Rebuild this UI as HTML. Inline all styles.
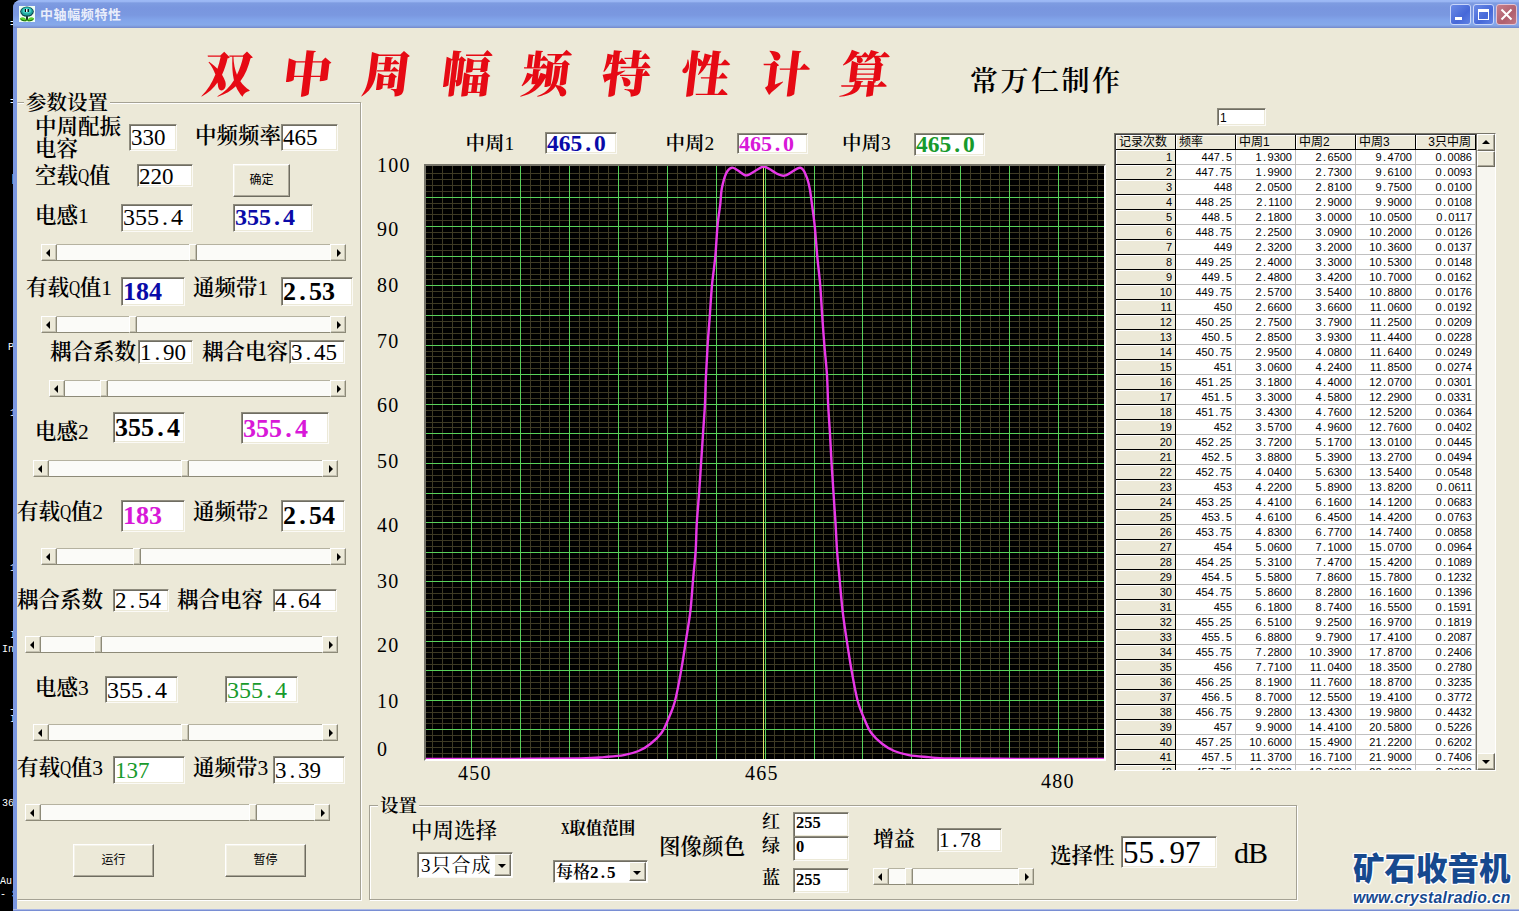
<!DOCTYPE html>
<html lang="zh-CN"><head><meta charset="utf-8"><title>中轴幅频特性</title>
<style>
*{box-sizing:border-box;margin:0;padding:0}
html,body{width:1519px;height:911px;overflow:hidden;background:#ECE9D8}
body{position:relative;font-family:"Liberation Serif","Noto Serif CJK SC",serif;color:#000}
.a{position:absolute;white-space:nowrap}
.lb{margin-top:1px;position:absolute;white-space:nowrap;font-size:21.500px;line-height:22px;font-weight:600;letter-spacing:0}
.tb{position:absolute;background:#fff;border:1px solid;border-color:#8E8B7D #FBFAF6 #FBFAF6 #8E8B7D;box-shadow:inset 1px 1px 0 #6F6D62, inset -1px -1px 0 #ECE9D8;white-space:nowrap;overflow:hidden;font-size:24px;padding-left:1px}
.tb i{font-style:normal;display:inline-block;width:.5em;text-align:center}
.b{font-weight:700}
.n{font-weight:400}
.q{font-weight:400;display:inline-block;width:.5em;transform:scaleX(.72);transform-origin:0 50%}
.sb{position:absolute;height:17px;background:#FBFBF8;border-top:1px solid #B5B2A0;border-bottom:1px solid #8D8A78}
.sb .l,.sb .r,.sb .t{position:absolute;top:-1px;height:17px;background:#ECE9D8;border:1px solid;border-color:#FFFFFF #8D8A78 #8D8A78 #FFFFFF;box-shadow:inset -1px -1px 0 #C5C2B2}
.sb .l{left:0;width:16px}
.sb .r{right:0;width:16px}
.sb .t{width:8px}
.sb .l:after,.sb .r:after{content:"";position:absolute;top:4px;border:4px solid transparent}
.sb .l:after{left:0px;border-right-color:#000;border-left-width:0;left:4px}
.sb .r:after{border-left-color:#000;border-right-width:0;left:6px}
.btn{position:absolute;background:#ECE9D8;border:1px solid;border-color:#FFFFFF #6E6C60 #6E6C60 #FFFFFF;box-shadow:inset -1px -1px 0 #ACA899, inset 1px 1px 0 #F4F2E8;font-family:"Liberation Sans","Noto Sans CJK SC",sans-serif;font-size:12px;text-align:center}
.gb{position:absolute;border:1px solid #A5A294;box-shadow:inset 1px 1px 0 #fff, 1px 1px 0 #fff}
.lg{position:absolute;background:#ECE9D8;white-space:nowrap;font-weight:600}
.ax{position:absolute;white-space:nowrap;font-size:20px;line-height:20px;letter-spacing:1.200px}
.cb{position:absolute;background:#fff;border:1px solid;border-color:#8E8B7D #FBFAF6 #FBFAF6 #8E8B7D;box-shadow:inset 1px 1px 0 #6F6D62;white-space:nowrap;overflow:hidden}
.cb u{position:absolute;right:1px;top:1px;bottom:1px;width:17px;background:#ECE9D8;border:1px solid;border-color:#fff #6E6C60 #6E6C60 #fff;box-shadow:inset -1px -1px 0 #ACA899}
.cb u:after{content:"";position:absolute;left:3px;top:50%;margin-top:-1px;border:4px solid transparent;border-top:4px solid #000;border-bottom-width:0}
table.g{position:absolute;border-collapse:separate;border-spacing:0;font-family:"Liberation Sans","Noto Sans CJK SC",sans-serif;font-size:11px;table-layout:fixed}
table.g td{height:15px;width:60px;line-height:14px;padding:0 3px 0 0;text-align:right;background:#fff;border-right:1px solid #C0C0C0;border-bottom:1px solid #C0C0C0;overflow:hidden;white-space:nowrap}
table.g td i{font-style:normal;display:inline-block;width:6px;text-align:center}
table.g td.h{background:#ECE9D8;border-right:1px solid #000;border-bottom:1px solid #000;box-shadow:inset 1px 1px 0 #fff}
table.g tr.hd td{text-align:left;padding-left:3px;font-size:12px}
</style></head>
<body>
<div class="a" style="left:0;top:0;width:26px;height:911px;background:#000"></div>
<div class="a" style="left:8px;top:342px;font-family:'Liberation Mono',monospace;font-size:10px;line-height:12px;color:#fff;width:5px;overflow:hidden">P</div>
<div class="a" style="left:2px;top:644px;font-family:'Liberation Mono',monospace;font-size:10px;line-height:12px;color:#fff;width:11px;overflow:hidden">In</div>
<div class="a" style="left:10px;top:630px;font-family:'Liberation Mono',monospace;font-size:10px;line-height:12px;color:#fff;width:3px;overflow:hidden">I</div>
<div class="a" style="left:2px;top:798px;font-family:'Liberation Mono',monospace;font-size:10px;line-height:12px;color:#fff;width:11px;overflow:hidden">36</div>
<div class="a" style="left:0px;top:876px;font-family:'Liberation Mono',monospace;font-size:10px;line-height:12px;color:#fff;width:13px;overflow:hidden">Au</div>
<div class="a" style="left:0px;top:889px;font-family:'Liberation Mono',monospace;font-size:10px;line-height:12px;color:#fff;width:13px;overflow:hidden">- S</div>
<div class="a" style="left:10px;top:19px;font-family:'Liberation Mono',monospace;font-size:10px;line-height:12px;color:#fff;width:3px;overflow:hidden">=</div>
<div class="a" style="left:10px;top:97px;font-family:'Liberation Mono',monospace;font-size:10px;line-height:12px;color:#fff;width:3px;overflow:hidden">=</div>
<div class="a" style="left:10px;top:408px;font-family:'Liberation Mono',monospace;font-size:10px;line-height:12px;color:#fff;width:3px;overflow:hidden">1</div>
<div class="a" style="left:10px;top:563px;font-family:'Liberation Mono',monospace;font-size:10px;line-height:12px;color:#fff;width:3px;overflow:hidden">1</div>
<div class="a" style="left:9px;top:704px;font-family:'Liberation Mono',monospace;font-size:10px;line-height:12px;color:#fff;width:4px;overflow:hidden">-</div>
<div class="a" style="left:10px;top:714px;font-family:'Liberation Mono',monospace;font-size:10px;line-height:12px;color:#fff;width:3px;overflow:hidden">I</div>
<div class="a" style="left:10px;top:174px;font-family:'Liberation Mono',monospace;font-size:10px;line-height:12px;color:#fff;width:3px;overflow:hidden">|</div>
<div class="a" style="left:13px;top:0;width:1506px;height:911px;background:#7B97E0;border-top-left-radius:8px"></div>
<div class="a" style="left:13px;top:0;width:1506px;height:28px;border-top-left-radius:8px;background:linear-gradient(#9DBAF6 0,#9AB6F3 1.500px,#7E9CE1 3px,#7996DF 8px,#7A98E0 15px,#82A4EA 20px,#86A9EA 25px,#7C94D6 27px,#7088CA 28px)"></div>
<div class="a" style="left:17px;top:28px;width:1502px;height:881px;background:#ECE9D8"></div>
<svg class="a" style="left:19px;top:6px" width="16" height="16" viewBox="0 0 16 16"><rect width="16" height="16" fill="#EEFFF4"/><path d="M8 9.500v5.500" stroke="#04240E" stroke-width="1.800"/><path d="M8 15C5.500 15.600 2 15 .8 12.400 3.600 10.200 6.800 11.600 8 15zM8 15c2.500.6 6 0 7.200-2.600C12.400 10.200 9.200 11.600 8 15z" fill="#5AD02C"/><path d="M1.500 13.200c1.500 1.300 3.500 1.700 5.500 1.500M14.500 13.200c-1.500 1.300-3.500 1.700-5.500 1.500" stroke="#17680F" stroke-width="1" fill="none"/><ellipse cx="8" cy="5.600" rx="6.800" ry="5.200" fill="#0C4450"/><ellipse cx="8" cy="5.200" rx="5.800" ry="4.300" fill="#1FA59B"/><ellipse cx="8" cy="4.800" rx="4.300" ry="2.700" fill="#45D0C6"/><rect x="5.900" y="3" width="1.200" height="3" fill="#000"/><rect x="7.100" y="3" width="1.500" height="3" fill="#fff"/><rect x="8.600" y="3" width="1.200" height="3" fill="#000"/></svg>
<div class="a" style="left:40px;top:7px;font:700 13px/15px 'Liberation Sans','Noto Sans CJK SC',sans-serif;color:#E9EEFB;letter-spacing:.6px">中轴幅频特性</div>
<div class="a" style="left:1450px;top:4px;width:21px;height:21px;border-radius:3px;border:1px solid #C9D6FA;background:linear-gradient(135deg,#6B8BE6,#4668D8 60%,#5F82E4)">
<div class="a" style="left:4px;top:12px;width:7px;height:3px;background:#fff"></div>
</div>
<div class="a" style="left:1473px;top:4px;width:21px;height:21px;border-radius:3px;border:1px solid #C9D6FA;background:linear-gradient(135deg,#6B8BE6,#4668D8 60%,#5F82E4)">
<div class="a" style="left:4px;top:4px;width:11px;height:11px;border:1px solid #fff;border-top-width:3px"></div>
</div>
<div class="a" style="left:1496px;top:4px;width:21px;height:21px;border-radius:3px;border:1px solid #E3C3D3;background:linear-gradient(135deg,#C77F8B,#B0606E 60%,#C07784)">
<svg class="a" style="left:0;top:0" width="19" height="19" viewBox="0 0 19 19"><path d="M4.500 4.500l10 10M14.500 4.500l-10 10" stroke="#fff" stroke-width="2"/></svg>
</div>
<div class="a" style="left:198px;top:36px;font-size:49px;line-height:80px;font-weight:900;color:#E60A14;letter-spacing:30.700px;transform:skewX(-7deg);transform-origin:0 100%">双中周幅频特性计算</div>
<div class="a" style="left:970px;top:64px;font-size:28px;line-height:36px;font-weight:600;letter-spacing:2.500px">常万仁制作</div>
<div class="tb" style="left:1217px;top:108px;width:49px;height:18px;font:12px/18px 'Liberation Sans',sans-serif;padding-left:2px">1</div>
<div class="gb" style="left:17px;top:102px;width:344px;height:798px;border-left-color:transparent;box-shadow:inset 0 1px 0 #fff,1px 1px 0 #fff"></div>
<div class="lg" style="left:24px;top:91.500px;font-size:20.500px;line-height:22px;padding:0 2px">参数设置</div>
<div class="lb" style="left:35px;top:115px;">中周配振<br>电容</div>
<div class="tb " style="left:129px;top:124px;width:48px;height:27px;line-height:26px;font-size:23px;">330</div>
<div class="lb" style="left:195px;top:124px;">中频频率</div>
<div class="tb " style="left:281px;top:124px;width:57px;height:27px;line-height:26px;font-size:23px;">465</div>
<div class="lb" style="left:35px;top:164px;">空载<span class="q">Q</span>值</div>
<div class="tb " style="left:137px;top:164px;width:56px;height:23px;line-height:24px;font-size:23px;">220</div>
<div class="btn" style="left:233px;top:164px;width:57px;height:33px;line-height:31px">确定</div>
<div class="lb" style="left:35px;top:204px;">电感<span class="n">1</span></div>
<div class="tb " style="left:121px;top:204px;width:72px;height:28px;line-height:24.0px;">355<i>.</i>4</div>
<div class="tb b" style="left:233px;top:204px;width:80px;height:28px;line-height:24.0px;color:#0A0AA8;">355<i>.</i>4</div>
<div class="sb" style="left:41px;top:244px;width:305px"><div class="l"></div><div class="t" style="left:148px"></div><div class="r"></div></div>
<div class="lb" style="left:26px;top:276px;">有载<span class="q">Q</span>值<span class="n">1</span></div>
<div class="tb b" style="left:121px;top:277px;width:64px;height:29px;line-height:28px;color:#0A0AA8;font-size:26px;">184</div>
<div class="lb" style="left:193px;top:276px;">通频带<span class="n">1</span></div>
<div class="tb b" style="left:281px;top:277px;width:72px;height:29px;line-height:28px;font-size:26px;">2<i>.</i>53</div>
<div class="sb" style="left:41px;top:316px;width:305px"><div class="l"></div><div class="t" style="left:88px"></div><div class="r"></div></div>
<div class="lb" style="left:50px;top:340px;">耦合系数</div>
<div class="tb " style="left:138px;top:340px;width:55px;height:24px;line-height:23px;font-size:23px;">1<i>.</i>90</div>
<div class="lb" style="left:202px;top:340px;">耦合电容</div>
<div class="tb " style="left:289px;top:340px;width:56px;height:24px;line-height:23px;font-size:23px;">3<i>.</i>45</div>
<div class="sb" style="left:49px;top:380px;width:297px"><div class="l"></div><div class="t" style="left:51px"></div><div class="r"></div></div>
<div class="lb" style="left:35px;top:420px;">电感<span class="n">2</span></div>
<div class="tb b" style="left:113px;top:412px;width:72px;height:31px;line-height:30px;font-size:26px;">355<i>.</i>4</div>
<div class="tb b" style="left:241px;top:412px;width:88px;height:32px;line-height:31px;color:#D818D8;font-size:26px;">355<i>.</i>4</div>
<div class="sb" style="left:33px;top:460px;width:305px"><div class="l"></div><div class="t" style="left:148px"></div><div class="r"></div></div>
<div class="lb" style="left:17px;top:500px;">有载<span class="q">Q</span>值<span class="n">2</span></div>
<div class="tb b" style="left:121px;top:500px;width:64px;height:32px;line-height:29px;color:#D818D8;font-size:26px;">183</div>
<div class="lb" style="left:193px;top:500px;">通频带<span class="n">2</span></div>
<div class="tb b" style="left:281px;top:500px;width:64px;height:32px;line-height:29px;font-size:26px;">2<i>.</i>54</div>
<div class="sb" style="left:41px;top:548px;width:305px"><div class="l"></div><div class="t" style="left:92px"></div><div class="r"></div></div>
<div class="lb" style="left:17px;top:588px;">耦合系数</div>
<div class="tb " style="left:113px;top:589px;width:56px;height:23px;line-height:22px;font-size:23px;">2<i>.</i>54</div>
<div class="lb" style="left:177px;top:588px;">耦合电容</div>
<div class="tb " style="left:273px;top:589px;width:64px;height:23px;line-height:22px;font-size:23px;">4<i>.</i>64</div>
<div class="sb" style="left:25px;top:636px;width:313px"><div class="l"></div><div class="t" style="left:69px"></div><div class="r"></div></div>
<div class="lb" style="left:35px;top:676px;">电感<span class="n">3</span></div>
<div class="tb " style="left:105px;top:676px;width:73px;height:27px;line-height:27.0px;font-size:24px;">355<i>.</i>4</div>
<div class="tb " style="left:225px;top:676px;width:73px;height:27px;line-height:27.0px;color:#189A2C;font-size:24px;">355<i>.</i>4</div>
<div class="sb" style="left:33px;top:724px;width:305px"><div class="l"></div><div class="t" style="left:148px"></div><div class="r"></div></div>
<div class="lb" style="left:17px;top:756px;">有载<span class="q">Q</span>值<span class="n">3</span></div>
<div class="tb " style="left:113px;top:756px;width:72px;height:28px;line-height:27px;color:#189A2C;font-size:23px;">137</div>
<div class="lb" style="left:193px;top:756px;">通频带<span class="n">3</span></div>
<div class="tb " style="left:273px;top:756px;width:72px;height:28px;line-height:27px;font-size:23px;">3<i>.</i>39</div>
<div class="sb" style="left:25px;top:804px;width:305px"><div class="l"></div><div class="t" style="left:224px"></div><div class="r"></div></div>
<div class="btn" style="left:73px;top:844px;width:81px;height:33px;line-height:31px">运行</div>
<div class="btn" style="left:225px;top:844px;width:81px;height:33px;line-height:31px">暂停</div>
<div class="a" style="left:424px;top:164px;width:682px;height:597px;border:2px solid;border-color:#77756A #FFFFFF #FFFFFF #77756A;background:#000"></div>
<svg class="a" style="left:426px;top:166px" width="678" height="593" viewBox="426 166 678 593" shape-rendering="crispEdges"><rect x="426" y="166" width="678" height="593" fill="#000"/><path d="M432.5 166V759M442.5 166V759M452.5 166V759M461.5 166V759M481.5 166V759M491.5 166V759M501.5 166V759M510.5 166V759M530.5 166V759M540.5 166V759M549.5 166V759M559.5 166V759M579.5 166V759M589.5 166V759M598.5 166V759M608.5 166V759M628.5 166V759M637.5 166V759M647.5 166V759M657.5 166V759M677.5 166V759M686.5 166V759M696.5 166V759M706.5 166V759M725.5 166V759M735.5 166V759M745.5 166V759M755.5 166V759M774.5 166V759M784.5 166V759M794.5 166V759M804.5 166V759M823.5 166V759M833.5 166V759M843.5 166V759M853.5 166V759M872.5 166V759M882.5 166V759M892.5 166V759M902.5 166V759M921.5 166V759M931.5 166V759M941.5 166V759M950.5 166V759M970.5 166V759M980.5 166V759M990.5 166V759M999.5 166V759M1019.5 166V759M1029.5 166V759M1038.5 166V759M1048.5 166V759M1068.5 166V759M1078.5 166V759M1087.5 166V759M1097.5 166V759M426 173.5H1104M426 179.5H1104M426 185.5H1104M426 191.5H1104M426 203.5H1104M426 208.5H1104M426 214.5H1104M426 220.5H1104M426 232.5H1104M426 238.5H1104M426 244.5H1104M426 250.5H1104M426 262.5H1104M426 268.5H1104M426 274.5H1104M426 279.5H1104M426 291.5H1104M426 297.5H1104M426 303.5H1104M426 309.5H1104M426 321.5H1104M426 327.5H1104M426 333.5H1104M426 339.5H1104M426 351.5H1104M426 356.5H1104M426 362.5H1104M426 368.5H1104M426 380.5H1104M426 386.5H1104M426 392.5H1104M426 398.5H1104M426 410.5H1104M426 416.5H1104M426 422.5H1104M426 427.5H1104M426 439.5H1104M426 445.5H1104M426 451.5H1104M426 457.5H1104M426 469.5H1104M426 475.5H1104M426 481.5H1104M426 487.5H1104M426 499.5H1104M426 504.5H1104M426 510.5H1104M426 516.5H1104M426 528.5H1104M426 534.5H1104M426 540.5H1104M426 546.5H1104M426 558.5H1104M426 564.5H1104M426 570.5H1104M426 575.5H1104M426 587.5H1104M426 593.5H1104M426 599.5H1104M426 605.5H1104M426 617.5H1104M426 623.5H1104M426 629.5H1104M426 635.5H1104M426 647.5H1104M426 652.5H1104M426 658.5H1104M426 664.5H1104M426 676.5H1104M426 682.5H1104M426 688.5H1104M426 694.5H1104M426 706.5H1104M426 712.5H1104M426 718.5H1104M426 723.5H1104M426 735.5H1104M426 741.5H1104M426 747.5H1104M426 753.5H1104" stroke="#3E3A24" stroke-width="1" fill="none"/><path d="M471.5 166V759M520.5 166V759M569.5 166V759M618.5 166V759M667.5 166V759M716.5 166V759M765.5 166V759M814.5 166V759M862.5 166V759M911.5 166V759M960.5 166V759M1009.5 166V759M1058.5 166V759M426 197.5H1104M426 226.5H1104M426 256.5H1104M426 285.5H1104M426 315.5H1104M426 345.5H1104M426 374.5H1104M426 404.5H1104M426 433.5H1104M426 463.5H1104M426 493.5H1104M426 522.5H1104M426 552.5H1104M426 581.5H1104M426 611.5H1104M426 641.5H1104M426 670.5H1104M426 700.5H1104M426 729.5H1104" stroke="#58D25A" stroke-width="1" fill="none"/><path d="M763.5 166V759" stroke="#DCE468" stroke-width="1" fill="none"/><path d="M426.0 759.0C438.3 759.0 474.3 759.0 500.0 758.9C525.7 758.8 562.6 758.8 580.0 758.5C597.4 758.2 597.1 757.7 604.4 757.1C611.7 756.5 618.1 756.1 623.8 755.1C629.5 754.1 634.0 752.9 638.5 751.0C643.0 749.1 646.8 746.8 650.6 743.7C654.5 740.7 658.8 736.6 661.6 732.7C664.5 728.8 665.5 725.8 667.7 720.5C669.9 715.2 672.8 709.3 675.0 701.0C677.2 692.7 679.3 680.8 681.1 670.6C682.9 660.5 684.5 650.1 686.0 640.1C687.5 630.1 689.2 621.5 690.4 610.9C691.6 600.3 692.4 586.9 693.3 576.8C694.2 566.6 695.1 559.0 695.7 550.0C696.3 541.0 696.2 532.4 696.8 522.9C697.4 513.4 698.4 502.7 699.1 492.9C699.8 483.1 700.4 473.9 701.0 464.1C701.6 454.3 702.4 443.9 703.0 434.1C703.6 424.3 704.4 415.1 704.9 405.3C705.4 395.5 705.5 385.4 706.0 375.4C706.5 365.4 707.0 355.4 707.6 345.5C708.2 335.6 709.1 326.0 709.8 315.9C710.5 305.8 711.1 295.0 712.0 285.1C712.9 275.2 714.4 266.5 715.3 256.6C716.2 246.7 716.7 234.7 717.5 225.9C718.3 217.1 719.6 210.1 720.3 203.9C721.0 197.7 720.8 193.6 721.8 188.5C722.8 183.4 724.6 176.7 726.2 173.2C727.9 169.7 729.7 168.1 731.7 167.7C733.7 167.2 735.6 169.2 738.0 170.5C740.4 171.8 743.2 175.3 746.0 175.4C748.8 175.5 752.1 172.5 755.0 171.0C757.9 169.5 760.8 166.7 763.6 166.6C766.4 166.5 769.6 169.3 772.0 170.6C774.4 171.9 775.8 173.4 778.0 174.2C780.2 175.0 781.8 176.5 785.5 175.4C789.2 174.3 796.7 167.5 800.2 167.7C803.7 167.9 804.8 173.0 806.4 176.5C808.0 180.0 808.8 183.9 809.7 188.5C810.6 193.1 811.1 197.7 811.9 203.9C812.7 210.1 813.8 217.1 814.7 225.9C815.6 234.7 816.4 246.7 817.3 256.6C818.2 266.5 819.4 275.2 820.2 285.1C821.0 295.0 821.5 305.8 822.2 315.9C822.9 326.0 823.6 335.6 824.4 345.5C825.2 355.4 826.4 365.4 827.0 375.4C827.6 385.4 827.7 395.5 828.2 405.3C828.7 415.1 829.4 424.3 830.0 434.1C830.6 443.9 831.0 454.3 831.6 464.1C832.2 473.9 832.9 483.1 833.5 492.9C834.1 502.7 834.9 513.4 835.5 522.9C836.1 532.4 836.4 541.0 837.0 550.0C837.6 559.0 838.5 566.6 839.4 576.8C840.3 586.9 841.4 600.3 842.6 610.9C843.8 621.5 845.2 630.1 846.7 640.1C848.2 650.1 849.8 660.5 851.6 670.6C853.4 680.8 855.5 692.7 857.7 701.0C859.9 709.3 862.8 715.2 865.0 720.5C867.2 725.8 868.2 728.8 871.1 732.7C874.0 736.6 878.2 740.7 882.1 743.7C886.0 746.8 889.8 749.1 894.3 751.0C898.8 752.9 903.2 754.1 908.9 755.1C914.6 756.1 921.5 756.5 928.4 757.1C935.2 757.7 933.1 758.2 950.0 758.5C966.9 758.8 1004.3 758.8 1030.0 758.9C1055.7 759.0 1091.7 759.0 1104.0 759.0" stroke="#E838E8" stroke-width="2.400" fill="none" stroke-linejoin="round" shape-rendering="auto"/></svg>
<div class="ax" style="left:377px;top:155px">100</div>
<div class="ax" style="left:377px;top:219px">90</div>
<div class="ax" style="left:377px;top:275px">80</div>
<div class="ax" style="left:377px;top:331px">70</div>
<div class="ax" style="left:377px;top:395px">60</div>
<div class="ax" style="left:377px;top:451px">50</div>
<div class="ax" style="left:377px;top:515px">40</div>
<div class="ax" style="left:377px;top:571px">30</div>
<div class="ax" style="left:377px;top:635px">20</div>
<div class="ax" style="left:377px;top:691px">10</div>
<div class="ax" style="left:377px;top:739px">0</div>
<div class="ax" style="left:458px;top:763px">450</div>
<div class="ax" style="left:745px;top:763px">465</div>
<div class="ax" style="left:1041px;top:771px">480</div>
<div class="a" style="left:465.5px;top:132.5px;font-size:19.5px;line-height:21.5px;font-weight:600;">中周<span class="n">1</span></div>
<div class="tb b" style="left:545px;top:132px;width:72px;height:22px;line-height:21px;color:#0A0AA8;font-size:23.5px;">465<i>.</i>0</div>
<div class="a" style="left:665.5px;top:132.5px;font-size:19.5px;line-height:21.5px;font-weight:600;">中周<span class="n">2</span></div>
<div class="tb b" style="left:737px;top:133px;width:71px;height:21px;line-height:19.0px;color:#D818D8;font-size:22px;">465<i>.</i>0</div>
<div class="a" style="left:842px;top:132.5px;font-size:19.5px;line-height:21.5px;font-weight:600;">中周<span class="n">3</span></div>
<div class="tb b" style="left:914px;top:133px;width:71px;height:23px;line-height:20px;color:#189A2C;font-size:23.5px;">465<i>.</i>0</div>
<div class="a" style="left:1114px;top:133px;width:382px;height:638px;border:1px solid;border-color:#77756A #fff #fff #77756A;background:#ECE9D8"></div>
<div class="a" style="left:1115px;top:134px;width:362px;height:636px;overflow:hidden;border-left:1px solid #404040;border-top:1px solid #404040;border-right:1px solid #77756A;background:#fff">
<table class="g" style="left:0;top:0;width:360px"><tr class="hd">
<td class="h">记录次数</td>
<td class="h">频率</td>
<td class="h">中周1</td>
<td class="h">中周2</td>
<td class="h">中周3</td>
<td class="h" style="text-align:right;padding-right:4px">3只中周</td>
</tr>
<tr><td class="h">1</td><td>447<i>.</i>5</td><td>1<i>.</i>9300</td><td>2<i>.</i>6500</td><td>9<i>.</i>4700</td><td>0<i>.</i>0086</td></tr>
<tr><td class="h">2</td><td>447<i>.</i>75</td><td>1<i>.</i>9900</td><td>2<i>.</i>7300</td><td>9<i>.</i>6100</td><td>0<i>.</i>0093</td></tr>
<tr><td class="h">3</td><td>448</td><td>2<i>.</i>0500</td><td>2<i>.</i>8100</td><td>9<i>.</i>7500</td><td>0<i>.</i>0100</td></tr>
<tr><td class="h">4</td><td>448<i>.</i>25</td><td>2<i>.</i>1100</td><td>2<i>.</i>9000</td><td>9<i>.</i>9000</td><td>0<i>.</i>0108</td></tr>
<tr><td class="h">5</td><td>448<i>.</i>5</td><td>2<i>.</i>1800</td><td>3<i>.</i>0000</td><td>10<i>.</i>0500</td><td>0<i>.</i>0117</td></tr>
<tr><td class="h">6</td><td>448<i>.</i>75</td><td>2<i>.</i>2500</td><td>3<i>.</i>0900</td><td>10<i>.</i>2000</td><td>0<i>.</i>0126</td></tr>
<tr><td class="h">7</td><td>449</td><td>2<i>.</i>3200</td><td>3<i>.</i>2000</td><td>10<i>.</i>3600</td><td>0<i>.</i>0137</td></tr>
<tr><td class="h">8</td><td>449<i>.</i>25</td><td>2<i>.</i>4000</td><td>3<i>.</i>3000</td><td>10<i>.</i>5300</td><td>0<i>.</i>0148</td></tr>
<tr><td class="h">9</td><td>449<i>.</i>5</td><td>2<i>.</i>4800</td><td>3<i>.</i>4200</td><td>10<i>.</i>7000</td><td>0<i>.</i>0162</td></tr>
<tr><td class="h">10</td><td>449<i>.</i>75</td><td>2<i>.</i>5700</td><td>3<i>.</i>5400</td><td>10<i>.</i>8800</td><td>0<i>.</i>0176</td></tr>
<tr><td class="h">11</td><td>450</td><td>2<i>.</i>6600</td><td>3<i>.</i>6600</td><td>11<i>.</i>0600</td><td>0<i>.</i>0192</td></tr>
<tr><td class="h">12</td><td>450<i>.</i>25</td><td>2<i>.</i>7500</td><td>3<i>.</i>7900</td><td>11<i>.</i>2500</td><td>0<i>.</i>0209</td></tr>
<tr><td class="h">13</td><td>450<i>.</i>5</td><td>2<i>.</i>8500</td><td>3<i>.</i>9300</td><td>11<i>.</i>4400</td><td>0<i>.</i>0228</td></tr>
<tr><td class="h">14</td><td>450<i>.</i>75</td><td>2<i>.</i>9500</td><td>4<i>.</i>0800</td><td>11<i>.</i>6400</td><td>0<i>.</i>0249</td></tr>
<tr><td class="h">15</td><td>451</td><td>3<i>.</i>0600</td><td>4<i>.</i>2400</td><td>11<i>.</i>8500</td><td>0<i>.</i>0274</td></tr>
<tr><td class="h">16</td><td>451<i>.</i>25</td><td>3<i>.</i>1800</td><td>4<i>.</i>4000</td><td>12<i>.</i>0700</td><td>0<i>.</i>0301</td></tr>
<tr><td class="h">17</td><td>451<i>.</i>5</td><td>3<i>.</i>3000</td><td>4<i>.</i>5800</td><td>12<i>.</i>2900</td><td>0<i>.</i>0331</td></tr>
<tr><td class="h">18</td><td>451<i>.</i>75</td><td>3<i>.</i>4300</td><td>4<i>.</i>7600</td><td>12<i>.</i>5200</td><td>0<i>.</i>0364</td></tr>
<tr><td class="h">19</td><td>452</td><td>3<i>.</i>5700</td><td>4<i>.</i>9600</td><td>12<i>.</i>7600</td><td>0<i>.</i>0402</td></tr>
<tr><td class="h">20</td><td>452<i>.</i>25</td><td>3<i>.</i>7200</td><td>5<i>.</i>1700</td><td>13<i>.</i>0100</td><td>0<i>.</i>0445</td></tr>
<tr><td class="h">21</td><td>452<i>.</i>5</td><td>3<i>.</i>8800</td><td>5<i>.</i>3900</td><td>13<i>.</i>2700</td><td>0<i>.</i>0494</td></tr>
<tr><td class="h">22</td><td>452<i>.</i>75</td><td>4<i>.</i>0400</td><td>5<i>.</i>6300</td><td>13<i>.</i>5400</td><td>0<i>.</i>0548</td></tr>
<tr><td class="h">23</td><td>453</td><td>4<i>.</i>2200</td><td>5<i>.</i>8900</td><td>13<i>.</i>8200</td><td>0<i>.</i>0611</td></tr>
<tr><td class="h">24</td><td>453<i>.</i>25</td><td>4<i>.</i>4100</td><td>6<i>.</i>1600</td><td>14<i>.</i>1200</td><td>0<i>.</i>0683</td></tr>
<tr><td class="h">25</td><td>453<i>.</i>5</td><td>4<i>.</i>6100</td><td>6<i>.</i>4500</td><td>14<i>.</i>4200</td><td>0<i>.</i>0763</td></tr>
<tr><td class="h">26</td><td>453<i>.</i>75</td><td>4<i>.</i>8300</td><td>6<i>.</i>7700</td><td>14<i>.</i>7400</td><td>0<i>.</i>0858</td></tr>
<tr><td class="h">27</td><td>454</td><td>5<i>.</i>0600</td><td>7<i>.</i>1000</td><td>15<i>.</i>0700</td><td>0<i>.</i>0964</td></tr>
<tr><td class="h">28</td><td>454<i>.</i>25</td><td>5<i>.</i>3100</td><td>7<i>.</i>4700</td><td>15<i>.</i>4200</td><td>0<i>.</i>1089</td></tr>
<tr><td class="h">29</td><td>454<i>.</i>5</td><td>5<i>.</i>5800</td><td>7<i>.</i>8600</td><td>15<i>.</i>7800</td><td>0<i>.</i>1232</td></tr>
<tr><td class="h">30</td><td>454<i>.</i>75</td><td>5<i>.</i>8600</td><td>8<i>.</i>2800</td><td>16<i>.</i>1600</td><td>0<i>.</i>1396</td></tr>
<tr><td class="h">31</td><td>455</td><td>6<i>.</i>1800</td><td>8<i>.</i>7400</td><td>16<i>.</i>5500</td><td>0<i>.</i>1591</td></tr>
<tr><td class="h">32</td><td>455<i>.</i>25</td><td>6<i>.</i>5100</td><td>9<i>.</i>2500</td><td>16<i>.</i>9700</td><td>0<i>.</i>1819</td></tr>
<tr><td class="h">33</td><td>455<i>.</i>5</td><td>6<i>.</i>8800</td><td>9<i>.</i>7900</td><td>17<i>.</i>4100</td><td>0<i>.</i>2087</td></tr>
<tr><td class="h">34</td><td>455<i>.</i>75</td><td>7<i>.</i>2800</td><td>10<i>.</i>3900</td><td>17<i>.</i>8700</td><td>0<i>.</i>2406</td></tr>
<tr><td class="h">35</td><td>456</td><td>7<i>.</i>7100</td><td>11<i>.</i>0400</td><td>18<i>.</i>3500</td><td>0<i>.</i>2780</td></tr>
<tr><td class="h">36</td><td>456<i>.</i>25</td><td>8<i>.</i>1900</td><td>11<i>.</i>7600</td><td>18<i>.</i>8700</td><td>0<i>.</i>3235</td></tr>
<tr><td class="h">37</td><td>456<i>.</i>5</td><td>8<i>.</i>7000</td><td>12<i>.</i>5500</td><td>19<i>.</i>4100</td><td>0<i>.</i>3772</td></tr>
<tr><td class="h">38</td><td>456<i>.</i>75</td><td>9<i>.</i>2800</td><td>13<i>.</i>4300</td><td>19<i>.</i>9800</td><td>0<i>.</i>4432</td></tr>
<tr><td class="h">39</td><td>457</td><td>9<i>.</i>9000</td><td>14<i>.</i>4100</td><td>20<i>.</i>5800</td><td>0<i>.</i>5226</td></tr>
<tr><td class="h">40</td><td>457<i>.</i>25</td><td>10<i>.</i>6000</td><td>15<i>.</i>4900</td><td>21<i>.</i>2200</td><td>0<i>.</i>6202</td></tr>
<tr><td class="h">41</td><td>457<i>.</i>5</td><td>11<i>.</i>3700</td><td>16<i>.</i>7100</td><td>21<i>.</i>9000</td><td>0<i>.</i>7406</td></tr>
<tr><td class="h">42</td><td>457<i>.</i>75</td><td>12<i>.</i>2000</td><td>18<i>.</i>0900</td><td>22<i>.</i>6000</td><td>0<i>.</i>8900</td></tr>
</table></div>
<div class="a" style="left:1477px;top:134px;width:18px;height:636px;background:#F7F6F0"></div>
<div class="a" style="left:1477px;top:134px;width:18px;height:17px;background:#ECE9D8;border:1px solid;border-color:#fff #6E6C60 #6E6C60 #fff;box-shadow:inset -1px -1px 0 #ACA899"><div class="a" style="left:4px;top:5px;border:4px solid transparent;border-bottom:4px solid #000;border-top-width:0"></div></div>
<div class="a" style="left:1477px;top:151px;width:18px;height:16px;background:#ECE9D8;border:1px solid;border-color:#fff #6E6C60 #6E6C60 #fff;box-shadow:inset -1px -1px 0 #ACA899"></div>
<div class="a" style="left:1477px;top:753px;width:18px;height:17px;background:#ECE9D8;border:1px solid;border-color:#fff #6E6C60 #6E6C60 #fff;box-shadow:inset -1px -1px 0 #ACA899"><div class="a" style="left:4px;top:6px;border:4px solid transparent;border-top:4px solid #000;border-bottom-width:0"></div></div>
<div class="gb" style="left:369px;top:805px;width:928px;height:95px"></div>
<div class="lg" style="left:378px;top:796px;font-size:18.500px;line-height:20px;padding:0 2px">设置</div>
<div class="lb" style="left:411px;top:819px;font-weight:500;">中周选择</div>
<div class="cb" style="left:417px;top:852px;width:96px;height:26px;font-size:19px;line-height:26px;padding-left:3px;letter-spacing:1px">3只合成<u></u></div>
<div class="a" style="left:561px;top:819px;font-size:16.500px;line-height:20px;font-weight:700"><span class="q" style="font-weight:700">X</span>取值范围</div>
<div class="cb" style="left:553px;top:860px;width:95px;height:23px;font-size:17px;line-height:24px;padding-left:2px;font-weight:600">每格2<i style="font-style:normal;display:inline-block;width:.5em;text-align:center">.</i>5<u></u></div>
<div class="lb" style="left:659px;top:835px;">图像颜色</div>
<div class="a" style="left:762px;top:812px;font-size:18px;line-height:20px;font-weight:600;">红</div>
<div class="a" style="left:762px;top:836px;font-size:18px;line-height:20px;font-weight:600;">绿</div>
<div class="a" style="left:762px;top:868px;font-size:18px;line-height:20px;font-weight:600;">蓝</div>
<div class="tb b" style="left:793px;top:812px;width:56px;height:25px;line-height:20px;font-size:16.5px;padding-left:2px;">255</div>
<div class="tb b" style="left:793px;top:836px;width:56px;height:25px;line-height:20px;font-size:16.5px;padding-left:2px;">0</div>
<div class="tb b" style="left:793px;top:868px;width:56px;height:25px;line-height:22px;font-size:16.5px;padding-left:2px;">255</div>
<div class="lb" style="left:873px;top:827px;font-size:21px;">增益</div>
<div class="tb " style="left:937px;top:828px;width:65px;height:24px;line-height:23px;font-size:21px;">1<i>.</i>78</div>
<div class="sb" style="left:873px;top:868px;width:161px"><div class="l"></div><div class="t" style="left:32px"></div><div class="r"></div></div>
<div class="lb" style="left:1050px;top:844px;">选择性</div>
<div class="tb " style="left:1121px;top:836px;width:96px;height:32px;line-height:32.0px;font-size:31px;">55<i>.</i>97</div>
<div class="a" style="left:1234px;top:834.500px;font-size:30px;line-height:36px;letter-spacing:-1px">dB</div>
<div class="a" style="left:1353px;top:850px;font:900 31.500px/38px 'Liberation Sans','Noto Sans CJK SC',sans-serif;color:#17498E;letter-spacing:0;text-shadow:1px 0 0 #fff,-1px 0 0 #fff,0 1px 0 #fff,0 -1px 0 #fff,1px 1px 0 #fff,-1px -1px 0 #fff,1px -1px 0 #fff,-1px 1px 0 #fff,0 0 3px #fff,0 0 2px #fff">矿石收音机</div>
<div class="a" style="left:1353px;top:889px;font:italic 700 15.700px/18px 'Liberation Sans',sans-serif;color:#17498E;letter-spacing:.3px;text-shadow:1px 0 0 #fff,-1px 0 0 #fff,0 1px 0 #fff,0 -1px 0 #fff,1px 1px 0 #fff,-1px -1px 0 #fff,1px -1px 0 #fff,-1px 1px 0 #fff,0 0 3px #fff,0 0 2px #fff">www.crystalradio.cn</div>
<div class="a" style="left:13px;top:909px;width:1506px;height:2px;background:linear-gradient(#D5DBF0 0,#8296D8 1px,#6F86CF 2px)"></div>
</body></html>
